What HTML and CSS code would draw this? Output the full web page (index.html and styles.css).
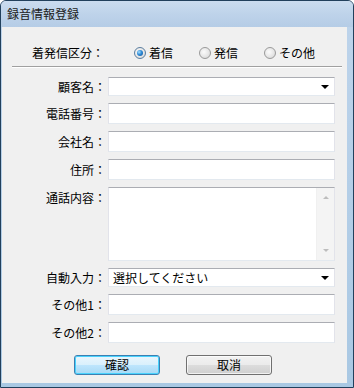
FILE: index.html
```html
<!DOCTYPE html>
<html lang="ja">
<head>
<meta charset="utf-8">
<title>録音情報登録</title>
<link rel="stylesheet" href="styles.css">
</head>
<body>
<div class="window">
  <div class="titlebar"><span class="title">録音情報登録</span></div>
  <div class="client">
    <div class="radio-row">
      <span class="radio-label">着発信区分：</span>
      <span class="radio checked"><span class="dot"></span>着信</span>
      <span class="radio"><span class="dot"></span>発信</span>
      <span class="radio"><span class="dot"></span>その他</span>
    </div>
    <div class="sep"></div>
    <div class="form">
      <span class="lbl lbl-combo">顧客名：</span>
      <div class="field combo"><span class="combo-text"></span><span class="arrow"></span></div>

      <span class="lbl">電話番号：</span>
      <div class="field"></div>

      <span class="lbl">会社名：</span>
      <div class="field"></div>

      <span class="lbl">住所：</span>
      <div class="field"></div>

      <span class="lbl">通話内容：</span>
      <div class="field memo">
        <div class="memo-body"></div>
        <div class="vscroll"><span class="sarrow up"></span><span class="sarrow down"></span></div>
      </div>

      <span class="lbl lbl-combo">自動入力：</span>
      <div class="field combo"><span class="combo-text">選択してください</span><span class="arrow"></span></div>

      <span class="lbl">その他1：</span>
      <div class="field"></div>

      <span class="lbl">その他2：</span>
      <div class="field"></div>
    </div>
    <div class="buttons">
      <button class="btn btn-default">確認</button>
      <button class="btn">取消</button>
    </div>
  </div>
</div>
</body>
</html>
```

FILE: styles.css
```css
html, body {
  margin: 0;
  padding: 0;
}

body {
  width: 354px;
  height: 388px;
  overflow: hidden;
  font-family: "Noto Sans CJK JP", "Noto Sans", sans-serif;
  font-size: 12px;
  color: #000;
  background: #ffffff;
}

.window {
  box-sizing: border-box;
  width: 354px;
  height: 388px;
  display: flex;
  flex-direction: column;
  border: 1px solid #22405c;
  border-radius: 6px 6px 0 0;
  background: linear-gradient(to bottom, #bed4eb, #a9c8e3);
}

.titlebar {
  height: 26px;
  display: flex;
  align-items: center;
  padding-left: 6px;
  background: linear-gradient(to bottom, #cbdcef 0%, #bed3ea 50%, #b5cce6 100%);
  border-radius: 5px 5px 0 0;
}

.title {
  font-size: 12px;
  line-height: 14px;
  color: #1a1a1a;
}

.client {
  flex: 1;
  margin: 0 6px 4px 1px;
  background: #f0f0f0;
  display: flex;
  flex-direction: column;
}

.radio-row {
  display: flex;
  align-items: center;
  height: 20px;
  margin-top: 16px;
  padding-left: 30px;
  line-height: 14px;
}

.radio-label {
  margin-right: 30px;
}

.radio {
  display: flex;
  align-items: center;
  gap: 3px;
  margin-right: 26px;
}

.dot {
  box-sizing: border-box;
  width: 12px;
  height: 12px;
  border-radius: 50%;
  border: 1px solid #9a9a9a;
  background: radial-gradient(circle at 40% 40%, #fbfbfb 0%, #e6e6e6 55%, #cfcfcf 100%);
  display: flex;
  align-items: center;
  justify-content: center;
}

.radio.checked .dot {
  border-color: #5a7d9f;
}

.radio.checked .dot::after {
  content: "";
  width: 6px;
  height: 6px;
  border-radius: 50%;
  background: radial-gradient(circle at 35% 35%, #a6e0ff 0%, #2f8ad6 45%, #0f4f94 100%);
}

.sep {
  margin: 3px 5px 0 10px;
  height: 1px;
  background: #a0a0a0;
  box-shadow: 0 1px 0 #ffffff;
}

.form {
  display: grid;
  grid-template-columns: 104px 227px;
  column-gap: 2px;
  row-gap: 7px;
  margin-top: 10px;
}

.lbl {
  text-align: right;
  line-height: 21px;
  white-space: nowrap;
}

.lbl-combo {
  line-height: 19px;
}

.field {
  box-sizing: border-box;
  height: 21px;
  background: #ffffff;
  border: 1px solid;
  border-color: #abadb3 #e2e3ea #e3e9ef #e2e3ea;
}

.combo {
  height: 19px;
  display: flex;
  align-items: center;
  justify-content: space-between;
  padding: 0 5px 0 4px;
  line-height: 15px;
}

.arrow {
  width: 0;
  height: 0;
  border-left: 4px solid transparent;
  border-right: 4px solid transparent;
  border-top: 4px solid #000;
  margin-top: 1px;
}

.memo {
  height: 74px;
  display: flex;
}

.memo-body {
  flex: 1;
}

.vscroll {
  width: 17px;
  background: #f4f4f4;
  border-left: 1px solid #f0f0f0;
  display: flex;
  flex-direction: column;
  justify-content: space-between;
  align-items: center;
  padding: 8px 0 8px;
}

.sarrow {
  width: 0;
  height: 0;
  border-left: 3px solid transparent;
  border-right: 3px solid transparent;
}

.sarrow.up {
  border-bottom: 3px solid #bdbdbd;
}

.sarrow.down {
  border-top: 3px solid #bdbdbd;
}

.buttons {
  display: flex;
  gap: 26px;
  margin-top: 12px;
  padding-left: 72px;
}

.btn {
  box-sizing: border-box;
  width: 86px;
  height: 20px;
  padding: 0;
  font: inherit;
  font-size: 12px;
  line-height: 16px;
  color: #000;
  border: 1px solid #707070;
  border-radius: 3px;
  background: linear-gradient(to bottom, #f2f2f2 0%, #ebebeb 50%, #dddddd 50%, #cfcfcf 100%);
  box-shadow: inset 0 0 0 1px rgba(255, 255, 255, 0.7);
}

.btn-default {
  border-color: #3c7fb1;
  background: linear-gradient(to bottom, #eaf6fd 0%, #d9f0fc 50%, #bee6fd 50%, #a7d9f5 100%);
  box-shadow: inset 0 0 0 1px #48d2fd;
}
```
